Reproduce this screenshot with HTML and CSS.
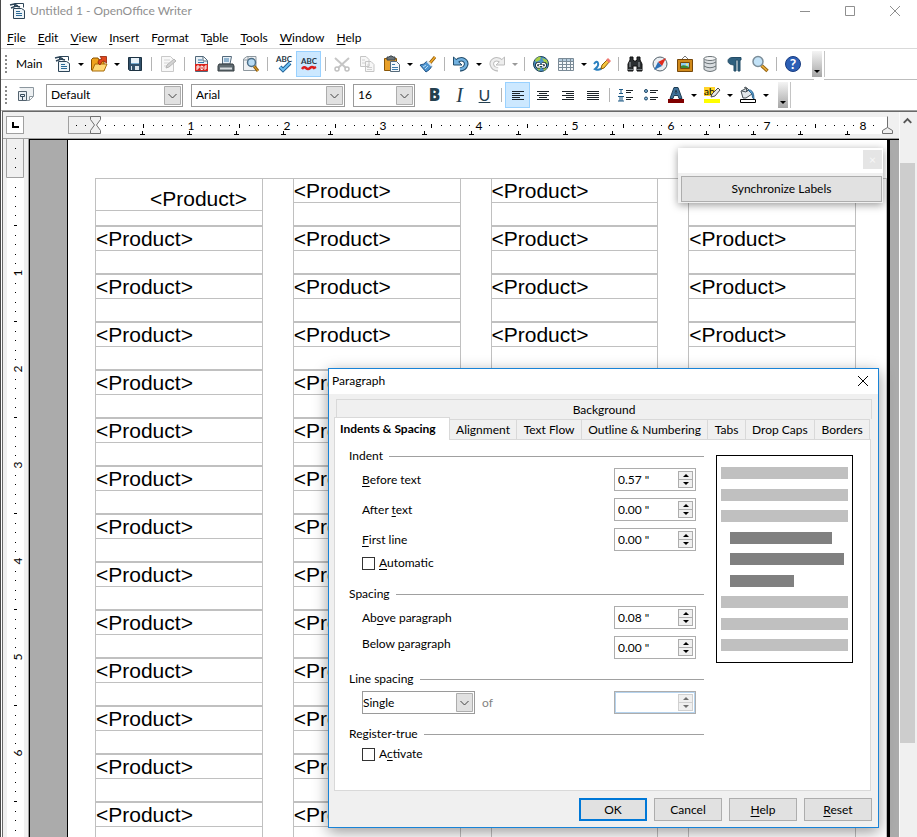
FILE: index.html
```
<!DOCTYPE html>
<html lang="en">

<head>
     <meta charset="UTF-8">
     <meta name="viewport" content="width=device-width, initial-scale=1.0">
     <title>Untitled 1 - OpenOffice Writer</title>
     <link rel="stylesheet" href="styles.css">
</head>

<body>
     <header class="titlebar">
          <svg class="icon" viewBox="0 0 18 18"><path d="M5.500 4V1.500h9v4" fill="#fff" stroke="#2d4558"/><path d="M1 3l4-1 4 2M2 6l5-2 4 1" stroke="#2d4558" stroke-width="1.500" fill="none"/><path d="M4.500 6.500h8l3 2v8h-11z" fill="#eef4f8" stroke="#2d4558"/><path d="M7 9.500h4M7 11.500h6M7 13.500h6" stroke="#2b6a97"/></svg>
          <h1>Untitled 1 - OpenOffice Writer</h1>
          <div class="window-buttons">
               <button aria-label="Minimize"><svg viewBox="0 0 12 12"><path d="M1 6.500h10"/></svg></button>
               <button aria-label="Maximize"><svg viewBox="0 0 12 12"><path d="M1.500 1.500h9v9h-9z"/></svg></button>
               <button aria-label="Close"><svg viewBox="0 0 12 12"><path d="M1 1l10 10M11 1L1 11"/></svg></button>
          </div>
     </header>

     <nav class="menubar">
          <a href="#"><u>F</u>ile</a>
          <a href="#"><u>E</u>dit</a>
          <a href="#"><u>V</u>iew</a>
          <a href="#"><u>I</u>nsert</a>
          <a href="#">F<u>o</u>rmat</a>
          <a href="#">T<u>a</u>ble</a>
          <a href="#"><u>T</u>ools</a>
          <a href="#"><u>W</u>indow</a>
          <a href="#"><u>H</u>elp</a>
     </nav>

     <!-- standard toolbar -->
     <div class="toolbar">
          <i class="grip"></i>
          <span class="toolbar-name">Main</span>
          <button class="tool" aria-label="New"><svg class="icon" viewBox="0 0 18 18"><path d="M5.500 4V1.500h9v4" fill="#fff" stroke="#2d4558"/><path d="M1 3l4-1 4 2M2 6l5-2 4 1" stroke="#2d4558" stroke-width="1.500" fill="none"/><path d="M4.500 6.500h8l3 2v8h-11z" fill="#eef4f8" stroke="#2d4558"/><path d="M7 9.500h4M7 11.500h6M7 13.500h6" stroke="#2b6a97"/></svg></button>
          <button class="drop" aria-label="New options"></button>
          <button class="tool" aria-label="Open"><svg class="icon" viewBox="0 0 18 18"><path d="M1.500 15V4.500L3 3h5l1 2h5v10z" fill="#f0a31c" stroke="#8a5200"/><path d="M2 16l3-7h12l-3 7z" fill="#ffd976" stroke="#a86a08"/><path d="M8 8c0-3 2-4 4-4l-2-2.500h6.500V8L14 6c-2 0-3 2-4 4z" fill="#e2471c" stroke="#8e2308" stroke-width=".8"/></svg></button>
          <button class="drop" aria-label="Open options"></button>
          <button class="tool" aria-label="Save"><svg class="icon" viewBox="0 0 18 18"><path d="M2.500 2.500h13v13h-12l-1-1z" fill="#31506a" stroke="#1d3242"/><path d="M5 3h8v6H5z" fill="#e9f2f8"/><path d="M5 8.500h8" stroke="#74a9cf"/><path d="M5 11h8v4H5z" fill="#dce5ec"/><path d="M6 11h3v4H6z" fill="#31506a"/></svg></button>
          <i class="sep"></i>
          <button class="tool" aria-label="Edit file" disabled><svg class="icon" viewBox="0 0 18 18"><path d="M2.500 1.500h9l3 3v12h-12z" fill="#f8f8f8" stroke="#c9c9c9"/><path d="M5 5h6M5 8h5M5 11h3" stroke="#d4d4d4"/><path d="M7 13l1-3 7-6 2 2-7 6z" fill="#d2d2d2" stroke="#b5b5b5"/></svg></button>
          <i class="sep"></i>
          <button class="tool" aria-label="Export as PDF"><svg class="icon" viewBox="0 0 18 18"><path d="M3.500 1.500h8l4 4v11h-12z" fill="#e9f0f5" stroke="#51687a"/><path d="M11 2v4h4" fill="#fff" stroke="#51687a"/><path d="M6 5h4M6 7.500h6" stroke="#3779a8"/><path d="M3 9h13v7H3z" fill="#d9251d"/><path d="M5 15v-4h2v2H5M9 11v3.500h1.500l.5-1v-2zM13 15v-4h2M13 13h2" fill="none" stroke="#fff"/></svg></button>
          <button class="tool" aria-label="Print"><svg class="icon" viewBox="0 0 18 18"><path d="M5.500 9V1.500h9L13 9z" fill="#e7f0f7" stroke="#54697a"/><path d="M7 4h5M7 6h5" stroke="#3c7ba9"/><path d="M2 9h14l1 2v5H1v-5z" fill="#5f6a70" stroke="#343c40"/><path d="M3 13.500h12" stroke="#d8dde0" stroke-width="2"/></svg></button>
          <button class="tool" aria-label="Page preview"><svg class="icon" viewBox="0 0 18 18"><path d="M1.500 4L5 1.500h9v14H1.500z" fill="#f0f2f4" stroke="#8d979e"/><path d="M2 5h4V2" fill="none" stroke="#8d979e"/><path d="M12 11l4 5" stroke="#93600d" stroke-width="3"/><path d="M12 11l4 5" stroke="#e7aa34"/><circle cx="9.500" cy="7.500" r="4" fill="#b8dcf5" stroke="#4d6f88" stroke-width="1.500"/></svg></button>
          <i class="sep"></i>
          <button class="tool" aria-label="Spelling"><svg class="icon" viewBox="0 0 18 18"><text class="abc" x="9" y="7">ABC</text><path d="M5 12l3 3 7-7" fill="none" stroke="#1e5f94" stroke-width="4"/><path d="M5 12l3 3 7-7" fill="none" stroke="#6ec1f4" stroke-width="2"/></svg></button>
          <button class="tool on" aria-label="AutoSpellcheck"><svg class="icon" viewBox="0 0 18 18"><text class="abc" x="9" y="9">ABC</text><path d="M2 14q2-3 4-1t4 0q2-2 4 0l2-1" fill="none" stroke="#dc1d1d" stroke-width="2.500"/></svg></button>
          <i class="sep"></i>
          <button class="tool" aria-label="Cut" disabled><svg class="icon" viewBox="0 0 18 18"><path d="M2 3l11 10M16 3L5 13" stroke="#c6c6c6" stroke-width="2"/><circle cx="4" cy="14" r="2" fill="none" stroke="#c0c0c0" stroke-width="1.500"/><circle cx="14" cy="14" r="2" fill="none" stroke="#c0c0c0" stroke-width="1.500"/></svg></button>
          <button class="tool" aria-label="Copy" disabled><svg class="icon" viewBox="0 0 18 18"><path d="M2.500 1.500H8l3 3v7H2.500zM7.500 6.500H13l3 3v7H7.500z" fill="#f7f7f7" stroke="#c5c5c5"/><path d="M4 5h3M4 8h3M9 10h3M9 12.500h5M9 14.500h5" stroke="#d0d0d0"/></svg></button>
          <button class="tool" aria-label="Paste"><svg class="icon" viewBox="0 0 18 18"><path d="M1.500 3.500h12v12h-12z" fill="#e9a029" stroke="#8b5707"/><path d="M4 4V2h2l1-1h2l1 1h2v3H4z" fill="#6b7479" stroke="#3e474c"/><path d="M7.500 6.500h6l3 3v7h-9z" fill="#f3f8fc" stroke="#566b7b"/><path d="M9 9.500h3M9 12.500h6M9 14.500h6" stroke="#3d7cab"/></svg></button>
          <button class="drop" aria-label="Paste options"></button>
          <button class="tool" aria-label="Format paintbrush"><svg class="icon" viewBox="0 0 18 18"><path d="M11 8l5-6" stroke="#8a5707" stroke-width="3"/><path d="M11 8l5-6" stroke="#f1a929" stroke-width="1.500"/><path d="M1 10q4 0 7-4l5 5q-2 4-6 6z" fill="#4d94d0" stroke="#1f5285"/><path d="M4 12l3-2M6 14l3-3" stroke="#b9dcf6"/><path d="M8 6l5 5" stroke="#dfe7ed" stroke-width="2"/></svg></button>
          <i class="sep"></i>
          <button class="tool" aria-label="Undo"><svg class="icon" viewBox="0 0 18 18"><path d="M4 7q4-4 8-2 3 2 2 5-1 4-6 4.500" fill="none" stroke="#214c6b" stroke-width="4.500"/><path d="M1.500 2v8H10z" fill="#72b1df" stroke="#214c6b"/><path d="M4 7q4-4 8-2 3 2 2 5-1 4-6 4" fill="none" stroke="#72b1df" stroke-width="2.500"/></svg></button>
          <button class="drop" aria-label="Undo steps"></button>
          <button class="tool" aria-label="Redo" disabled><svg class="icon" viewBox="0 0 18 18"><path d="M14 7q-4-4-8-2-3 2-2 5 1 4 6 4.500" fill="none" stroke="#bcbcbc" stroke-width="4.500"/><path d="M16.500 2v8H8z" fill="#eee" stroke="#bcbcbc"/><path d="M14 7q-4-4-8-2-3 2-2 5 1 4 6 4" fill="none" stroke="#eee" stroke-width="2.500"/></svg></button>
          <button class="drop dim" aria-label="Redo steps" disabled></button>
          <i class="sep"></i>
          <button class="tool" aria-label="Hyperlink"><svg class="icon" viewBox="0 0 18 18"><circle cx="9" cy="9" r="7.500" fill="#4a91c6" stroke="#1d4056"/><path d="M3 5q3-4 6-3l-1 3-4 2zM10 3l5 2 1 4-4-2zM4 12h5l-2 4zM11 12l4 1-3 3z" fill="#a8cf45"/><path d="M8 8.500H5.500q-2 1.500 0 3.500H8M10 8.500h2.500q2 1.500 0 3.500H10M7 10.300h4" fill="none" stroke="#17262f" stroke-width="3"/><path d="M8 8.500H5.500q-2 1.500 0 3.500H8M10 8.500h2.500q2 1.500 0 3.500H10M7 10.300h4" fill="none" stroke="#fff" stroke-width="1.300"/></svg></button>
          <button class="tool" aria-label="Table"><svg class="icon" viewBox="0 0 18 18"><path d="M1.500 3.500h15v12h-15z" fill="#f5f8fa" stroke="#7b8b97"/><path d="M2 5h14" stroke="#b4cbdc" stroke-width="2"/><path d="M1 6.500h16M1 9.500h16M1 12.500h16M5.500 4v11M9.500 4v11M13.500 4v11" stroke="#7b8b97"/></svg></button>
          <button class="drop" aria-label="Table size"></button>
          <button class="tool" aria-label="Show draw functions"><svg class="icon" viewBox="0 0 18 18"><path d="M1 9q3-4 4-1t-3 6q4 2 7-1" fill="none" stroke="#2c81c0" stroke-width="2"/><path d="M8 14l1-4 6-6 2 2-6 7z" fill="#f6c43c" stroke="#8b5d0b"/><path d="M13 5l3 3 2-2-3-3z" fill="#ef7770"/></svg></button>
          <i class="sep"></i>
          <button class="tool" aria-label="Find and replace"><svg class="icon" viewBox="0 0 18 18"><path d="M4 2h3v3l1 1h2l1-1V2h3v3l2 4v7h-5v-5H7v5H2V9l2-4z" fill="#2b2f31" stroke="#111"/><path d="M4 7v5M13 7v5" stroke="#a3aaae"/><path d="M2 14.500h5M11 14.500h5" stroke="#757b7e"/></svg></button>
          <button class="tool" aria-label="Navigator"><svg class="icon" viewBox="0 0 18 18"><circle cx="9" cy="9" r="7" fill="#e9eef2" stroke="#54616b"/><path d="M15 3L7 7l4 4z" fill="#e02a1e"/><path d="M3 15l4-8 4 4z" fill="#2b70b7"/></svg></button>
          <button class="tool" aria-label="Gallery"><svg class="icon" viewBox="0 0 18 18"><path d="M5 5l4-4 4 4" fill="none" stroke="#777"/><path d="M1.500 4.500h15v12h-15z" fill="#d18a1a" stroke="#77480a"/><path d="M4.500 7.500h9v6h-9z" fill="#8ecdf3" stroke="#77480a"/><path d="M5 11q3-2 8 1v1H5z" fill="#3b8a34"/><circle cx="11" cy="9.500" r="1" fill="#fff06a"/></svg></button>
          <button class="tool" aria-label="Data sources"><svg class="icon" viewBox="0 0 18 18"><path d="M3 3.500v11q6 4 12 0v-11" fill="#d9dde0" stroke="#6c7478"/><ellipse cx="9" cy="3.500" rx="6" ry="2" fill="#f5f6f7" stroke="#6c7478"/><path d="M3 7q6 3.500 12 0M3 11q6 3.500 12 0" fill="none" stroke="#6c7478"/></svg></button>
          <button class="tool" aria-label="Nonprinting characters"><svg class="icon" viewBox="0 0 18 18"><path d="M15 2.500H7q-5 0-5 3.500t6 4v6h2V5h2v11h2V5h1z" fill="#2f607f" stroke="#234c66"/></svg></button>
          <button class="tool" aria-label="Zoom"><svg class="icon" viewBox="0 0 18 18"><path d="M10.500 10.500l6 5.500" stroke="#94620e" stroke-width="3.500"/><path d="M10.500 10.500l5.500 5" stroke="#f0b440" stroke-width="1.500"/><circle cx="7" cy="6.500" r="5" fill="#c2e2f7" stroke="#7b8d99" stroke-width="1.500"/></svg></button>
          <i class="sep"></i>
          <button class="tool" aria-label="Help"><svg class="icon" viewBox="0 0 18 18"><circle cx="9" cy="9" r="7.500" fill="#2c5fb5" stroke="#173b80"/><text class="question" x="9" y="14">?</text></svg></button>
          <button class="overflow" aria-label="Toolbar options"></button>
     </div>

     <!-- formatting toolbar -->
     <div class="toolbar formatting">
          <i class="grip"></i>
          <button class="tool styles-tool" aria-label="Styles and formatting"><svg class="icon" viewBox="0 0 18 18"><path d="M2.500 1.500h14v9l-4 4h-5" fill="#edf0f2" stroke="#8b969e"/><path d="M12.500 14v-3.500H16" fill="#fff" stroke="#8b969e"/><path d="M1.500 5.500h8v9h-8z" fill="#e9eef2" stroke="#53636f"/><path d="M3.500 8.500h4v2h-4zM5.500 11v3" fill="none" stroke="#34495a"/></svg></button>
          <select class="combo style-combo" aria-label="Apply style"><option>Default</option></select>
          <select class="combo font-combo" aria-label="Font name"><option>Arial</option></select>
          <select class="combo size-combo" aria-label="Font size"><option>16</option></select>
          <button class="tool letter bold" aria-label="Bold">B</button>
          <button class="tool letter italic" aria-label="Italic">I</button>
          <button class="tool letter underline" aria-label="Underline">U</button>
          <i class="sep"></i>
          <button class="tool on" aria-label="Align left"><svg class="icon" viewBox="0 0 18 18"><path class="lines" d="M3 5.500h12M3 7.500h8M3 9.500h12M3 11.500h8M3 13.500h12"/></svg></button>
          <button class="tool" aria-label="Centered"><svg class="icon" viewBox="0 0 18 18"><path class="lines" d="M3 5.500h12M5 7.500h8M3 9.500h12M5 11.500h8M3 13.500h12"/></svg></button>
          <button class="tool" aria-label="Align right"><svg class="icon" viewBox="0 0 18 18"><path class="lines" d="M3 5.500h12M7 7.500h8M3 9.500h12M7 11.500h8M3 13.500h12"/></svg></button>
          <button class="tool" aria-label="Justified"><svg class="icon" viewBox="0 0 18 18"><path class="lines" d="M3 5.500h12M3 7.500h12M3 9.500h12M3 11.500h12M3 13.500h12"/></svg></button>
          <i class="sep"></i>
          <button class="tool" aria-label="Numbering"><svg class="icon" viewBox="0 0 18 18"><path d="M2 3.500h4M4 3v4M2 7.500h4M1 10.500h6M3 11v4M5 11v4M1 15h6" stroke="#1f5a86"/><path class="lines" d="M9 4.500h7M9 6.500h5M9 11.500h7M9 13.500h5"/></svg></button>
          <button class="tool" aria-label="Bullets"><svg class="icon" viewBox="0 0 18 18"><circle cx="4" cy="5" r="1.500" fill="#87b9de" stroke="#1d4563"/><circle cx="4" cy="12.500" r="1.500" fill="#87b9de" stroke="#1d4563"/><path class="lines" d="M8 4.500h8M8 6.500h6M8 11.500h8M8 13.500h6"/></svg></button>
          <button class="tool" aria-label="Font color"><svg class="icon" viewBox="0 0 18 18"><path d="M3 12.500L7 1.500h4l4 11h-3l-1-3H7l-1 3zM8 7h2L9 4z" fill="#3f7199" stroke="#1d3b52"/><path d="M1 13h16v4H1z" fill="#800000"/></svg></button>
          <button class="drop" aria-label="Font color options"></button>
          <button class="tool" aria-label="Highlighting"><svg class="icon" viewBox="0 0 18 18"><path d="M1 1h11v9H1z" fill="#ffd42a"/><text class="ab" x="1" y="9">ab</text><path d="M8 11l1-3 6-6 2 2-5 6z" fill="#e9e9e9" stroke="#4a4a4a"/><path d="M1 13h16v4H1z" fill="#ff0"/></svg></button>
          <button class="drop" aria-label="Highlighting options"></button>
          <button class="tool" aria-label="Background color"><svg class="icon" viewBox="0 0 18 18"><path d="M2 5l6-3 5 6-6 4H4z" fill="#e3e7ea" stroke="#444d53"/><path d="M3 5l4 1 3-3M5 2l2-1 1 5" fill="none" stroke="#444d53"/><path d="M9 4q6-1 6 9-2 0-2-5z" fill="#5fa3d5" stroke="#2c6691"/><path d="M1.500 13.500h15v3h-15z" fill="#fff" stroke="#000"/></svg></button>
          <button class="drop" aria-label="Background color options"></button>
          <button class="overflow" aria-label="Toolbar options"></button>
     </div>

     <main class="editor">
          <div class="view">
               <div class="ruler-row">
                    <button class="tab-type" aria-label="Tab type"><svg viewBox="0 0 16 16"><path d="M6 5v5h6" fill="none" stroke="#000" stroke-width="2"/></svg></button>
                    <svg class="ruler-top" id="rulerTop">
                         <rect class="margin" x="0.500" y="0.500" width="27" height="17"/>
                         <rect class="scale" x="28" y="1" width="791" height="17"/>
                         <path class="marker" d="M22.500.5h10v3l-4 5.500 4 5.500v3h-10v-3l4-5.500-4-5.500z"/>
                         <path class="marker" d="M819.500.5v11l-5 3v3h10v-3l-5-3"/>
                    </svg>
               </div>
               <div class="page-row">
                    <svg class="ruler-left" id="rulerLeft">
                         <rect class="scale" x="1" y="0" width="17" height="100%"/>
                         <path class="margin" d="M.5 0v38.500h17V0"/>
                    </svg>
                    <div class="canvas">
                         <div class="page">
                              <div class="labels" id="labels"></div>
                         </div>
                    </div>
               </div>
          </div>
          <div class="scrollbar">
               <svg viewBox="0 0 16 16"><path d="M4 11l4-4 4 4" fill="none" stroke="#555" stroke-width="2"/></svg>
               <div class="thumb"></div>
          </div>
     </main>

     <div class="sync-window">
          <div class="sync-title"><button class="sync-close" aria-label="Close">×</button></div>
          <button class="push sync-button">Synchronize Labels</button>
     </div>

     <form class="dialog" id="paragraph">
          <div class="dialog-title">
               <h2>Paragraph</h2>
               <button type="button" aria-label="Close"><svg viewBox="0 0 12 12"><path d="M1 1l10 10M11 1L1 11"/></svg></button>
          </div>
          <div class="tabs">
               <button type="button" class="tab back">Background</button>
               <div class="tab-row">
                    <button type="button" class="tab current">Indents &amp; Spacing</button>
                    <button type="button" class="tab">Alignment</button>
                    <button type="button" class="tab">Text Flow</button>
                    <button type="button" class="tab">Outline &amp; Numbering</button>
                    <button type="button" class="tab">Tabs</button>
                    <button type="button" class="tab">Drop Caps</button>
                    <button type="button" class="tab">Borders</button>
               </div>
          </div>
          <div class="panel">
               <div class="settings">
                    <fieldset>
                         <legend>Indent</legend>
                         <div class="field">
                              <label for="before"><u>B</u>efore text</label>
                              <span class="spin"><input type="text" id="before" value='0.57 "'><span class="steps"><button type="button" class="up" aria-label="Increase"></button><button type="button" class="down" aria-label="Decrease"></button></span></span>
                         </div>
                         <div class="field">
                              <label for="after">After <u>t</u>ext</label>
                              <span class="spin"><input type="text" id="after" value='0.00 "'><span class="steps"><button type="button" class="up" aria-label="Increase"></button><button type="button" class="down" aria-label="Decrease"></button></span></span>
                         </div>
                         <div class="field">
                              <label for="first"><u>F</u>irst line</label>
                              <span class="spin"><input type="text" id="first" value='0.00 "'><span class="steps"><button type="button" class="up" aria-label="Increase"></button><button type="button" class="down" aria-label="Decrease"></button></span></span>
                         </div>
                         <label class="check"><input type="checkbox"><span><u>A</u>utomatic</span></label>
                    </fieldset>
                    <fieldset>
                         <legend>Spacing</legend>
                         <div class="field">
                              <label for="above">Ab<u>o</u>ve paragraph</label>
                              <span class="spin"><input type="text" id="above" value='0.08 "'><span class="steps"><button type="button" class="up" aria-label="Increase"></button><button type="button" class="down" aria-label="Decrease"></button></span></span>
                         </div>
                         <div class="field raised">
                              <label for="below">Below <u>p</u>aragraph</label>
                              <span class="spin"><input type="text" id="below" value='0.00 "'><span class="steps"><button type="button" class="up" aria-label="Increase"></button><button type="button" class="down" aria-label="Decrease"></button></span></span>
                         </div>
                    </fieldset>
                    <fieldset>
                         <legend>Line spacing</legend>
                         <div class="field">
                              <select class="combo line-combo" aria-label="Line spacing"><option>Single</option></select>
                              <label class="of" for="of">of</label>
                              <span class="spin off"><input type="text" id="of" disabled><span class="steps"><button type="button" class="up" aria-label="Increase" disabled></button><button type="button" class="down" aria-label="Decrease" disabled></button></span></span>
                         </div>
                    </fieldset>
                    <fieldset>
                         <legend>Register-true</legend>
                         <label class="check"><input type="checkbox"><span>A<u>c</u>tivate</span></label>
                    </fieldset>
               </div>
               <div class="preview">
                    <i></i><i></i><i></i>
                    <i class="dark first"></i><i class="dark"></i><i class="dark last"></i>
                    <i></i><i></i><i></i>
               </div>
          </div>
          <div class="actions">
               <button type="button" class="push default">OK</button>
               <button type="button" class="push">Cancel</button>
               <button type="button" class="push"><u>H</u>elp</button>
               <button type="reset" class="push"><u>R</u>eset</button>
          </div>
     </form>

     <script>
          const app = {
               inch: 96,
               columns: 4,
               rows: 14,
               svg: function (parent, tag, attrs, text) {
                    const node = document.createElementNS('http://www.w3.org/2000/svg', tag);
                    Object.keys(attrs).map(key => node.setAttribute(key, attrs[key]));
                    if (text) node.textContent = text;
                    parent.appendChild(node);
               },
               drawTop: function () {
                    const ruler = document.getElementById('rulerTop');
                    const zero = 27;
                    [9, 18].map(x => this.svg(ruler, 'rect', { x: x - 1, y: 9, width: 1, height: 1 }));
                    for (let i = 1; i < 82; i++) {
                         const x = Math.round(zero + i * this.inch / 10);
                         if (i % 10 === 0) {
                              this.svg(ruler, 'text', { x: x, y: 14 }, i / 10);
                         } else if (i % 5 === 0) {
                              this.svg(ruler, 'rect', { x: x, y: 8, width: 1, height: 4 });
                         } else {
                              this.svg(ruler, 'rect', { x: x, y: 9, width: 1, height: 1 });
                         }
                    }
                    // default tab stops
                    for (let x = 74; x < 800; x += 47) {
                         this.svg(ruler, 'path', { d: 'M' + x + ' 15h1v3h2v1h-5v-1h2z' });
                    }
               },
               drawLeft: function () {
                    const ruler = document.getElementById('rulerLeft');
                    const zero = 38;
                    [10, 20, 29].map(y => this.svg(ruler, 'rect', { x: 9, y: y - 1, width: 1, height: 1 }));
                    for (let i = 1; zero + i * this.inch / 10 < ruler.clientHeight; i++) {
                         const y = Math.round(zero + i * this.inch / 10);
                         if (i % 10 === 0) {
                              this.svg(ruler, 'text', { transform: 'translate(16 ' + y + ') rotate(-90)' }, i / 10);
                         } else if (i % 5 === 0) {
                              this.svg(ruler, 'rect', { x: 8, y: y, width: 3, height: 1 });
                         } else {
                              this.svg(ruler, 'rect', { x: 9, y: y, width: 1, height: 1 });
                         }
                    }
               },
               drawLabels: function () {
                    const labels = document.getElementById('labels');
                    for (let i = 0; i < this.rows * this.columns; i++) {
                         const label = document.createElement('div');
                         const field = document.createElement('p');
                         label.className = i === 0 ? 'label indented' : 'label';
                         field.textContent = '<Product>';
                         label.appendChild(field);
                         labels.appendChild(label);
                    }
               },
               init: function () {
                    this.drawTop();
                    this.drawLeft();
                    this.drawLabels();
               }
          }

          app.init();
     </script>
</body>

</html>
```
FILE: styles.css
```
* {
  box-sizing: border-box;
}

body {
  position: relative;
  display: flex;
  flex-direction: column;
  height: 100vh;
  margin: 0;
  overflow: hidden;
  border-left: 1px solid #4a4a4a;
  background: #fff;
  color: #000;
  font: 12px/16px Lato, "Open Sans", sans-serif;
}

button,
input,
select {
  margin: 0;
  padding: 0;
  border: 0;
  border-radius: 0;
  background: none;
  color: inherit;
  font: inherit;
}

u {
  text-underline-offset: 2px;
}

/* title and menu */

.titlebar {
  display: flex;
  align-items: center;
  flex: none;
  height: 22px;
  padding-left: 8px;
}

.titlebar h1 {
  flex: 1;
  margin: 0 0 0 3px;
  color: #8f8f8f;
  font-size: 12px;
  font-weight: normal;
}

.window-buttons {
  display: flex;
}

.window-buttons button {
  display: flex;
  justify-content: center;
  width: 45px;
}

.window-buttons svg,
.dialog-title svg {
  width: 12px;
  height: 12px;
  fill: none;
  stroke: #8f8f8f;
}

.menubar {
  display: flex;
  align-items: center;
  flex: none;
  gap: 12px;
  height: 26px;
  padding: 6px 6px 0;
}

.menubar a {
  color: #000;
  text-decoration: none;
}

/* toolbars */

.toolbar {
  display: flex;
  align-items: center;
  flex: none;
  height: 32px;
  border-top: 1px solid #d9d9d9;
  border-bottom: 1px solid #bdbdbd;
}

.toolbar.formatting {
  height: 31px;
  border-top: 0;
  border-bottom: 1px solid #bdbdbd;
}

.grip {
  flex: none;
  width: 2px;
  height: 18px;
  margin-left: 4px;
  background: repeating-linear-gradient(#8a8a8a 0 2px, #fff 2px 4px);
}

.toolbar-name {
  width: 34px;
  margin-left: 9px;
}

.icon {
  display: block;
  width: 18px;
  height: 18px;
  overflow: visible;
}

.tool {
  display: flex;
  align-items: center;
  justify-content: center;
  flex: none;
  width: 25px;
  height: 26px;
  border: 1px solid transparent;
}

.tool.on {
  border-color: #99d1ff;
  background: #cce8ff;
}

.drop {
  display: flex;
  justify-content: center;
  flex: none;
  width: 11px;
}

.drop::after,
.overflow::after {
  content: "";
  border: 3px solid transparent;
  border-top-color: #000;
  border-bottom: 0;
}

.drop.dim::after {
  border-top-color: #999;
}

.sep {
  flex: none;
  width: 8px;
  height: 14px;
  background: linear-gradient(#b4b4b4, #b4b4b4) center / 1px 100% no-repeat;
}

.overflow {
  display: flex;
  align-items: flex-end;
  justify-content: center;
  width: 10px;
  height: 26px;
  margin-left: 7px;
  padding-bottom: 4px;
  background: linear-gradient(#f4f4f4, #a6a6a6);
  box-shadow: 2px 0 #fff, 2px 3px #fff, 3px 0 #c4c4c4;
}

.abc {
  fill: #263845;
  font: bold 8px Lato, sans-serif;
  text-anchor: middle;
}

.ab {
  font: 10px Lato, sans-serif;
}

.question {
  fill: #fff;
  font: bold 14px Lato, sans-serif;
  text-anchor: middle;
}

.lines {
  stroke: #1c2328;
}

.styles-tool {
  margin: 0 8px 0 6px;
}

.combo {
  height: 23px;
  padding: 0 20px 0 4px;
  border: 1px solid #9a9a9a;
  background: #fff url("data:image/svg+xml,%3Csvg xmlns='http://www.w3.org/2000/svg' width='17' height='19'%3E%3Cpath d='M.5.5h16v18H.5z' fill='%23e1e1e1' stroke='%23adadad'/%3E%3Cpath d='M4.500 8l4 4 4-4' fill='none' stroke='%23444'/%3E%3C/svg%3E") right 1px center no-repeat;
  appearance: none;
}

.style-combo {
  width: 137px;
}

.font-combo {
  width: 154px;
  margin: 0 8px;
}

.size-combo {
  width: 62px;
  margin-right: 7px;
}

.letter {
  color: #25404f;
  font-size: 17px;
}

.letter.bold {
  font-family: "Open Sans", sans-serif;
  font-weight: 800;
}

.letter.italic {
  font-family: "Liberation Serif", serif;
  font-size: 20px;
  font-style: italic;
}

.letter.underline {
  font-size: 16px;
  text-decoration: underline;
}

/* document area */

.editor {
  display: flex;
  flex: 1;
  min-height: 0;
  margin-left: 1px;
  border-top: 1px solid #696969;
  border-left: 1px solid #696969;
  background: #f0f0f0;
  box-shadow: 0 -1px #a0a0a0;
}

.view {
  display: flex;
  flex: 1;
  flex-direction: column;
  min-width: 0;
}

.ruler-row {
  display: flex;
  flex: none;
  height: 27px;
  padding: 4px 0 0 3px;
  border-bottom: 1px solid #a0a0a0;
}

.tab-type {
  width: 18px;
  height: 18px;
  border: 1px solid #a0a0a0;
  background: #fff;
}

.tab-type svg {
  display: block;
}

.ruler-top {
  flex: 1;
  height: 20px;
  margin-left: 44px;
}

.ruler-top text,
.ruler-left text {
  font-size: 12px;
  text-anchor: middle;
}

.margin {
  fill: #f0f0f0;
  stroke: #a0a0a0;
}

.scale {
  fill: #fff;
}

.marker {
  fill: #f0f0f0;
  stroke: #707070;
}

.page-row {
  display: flex;
  flex: 1;
  min-height: 0;
}

.ruler-left {
  width: 19px;
  height: 100%;
  margin: 0 4px 0 3px;
}

.canvas {
  display: flex;
  flex: 1;
  border: solid #000;
  border-width: 1px 0 0 1px;
  outline: 1px solid #a0a0a0;
  padding: 0 9px 0 37px;
  background: #ababab;
}

.page {
  flex: 1;
  overflow: hidden;
  padding: 38px 0 0 27px;
  border: solid #000;
  border-width: 0 3px 0 1px;
  background: #fff;
}

.labels {
  display: grid;
  grid-template-columns: repeat(4, 1fr);
  column-gap: 30px;
  padding-right: 30px;
  border: solid #c0c0c0;
  border-width: 1px 1px 0 0;
}

.label {
  height: 48px;
  border: solid #c0c0c0;
  border-width: 0 1px 2px;
}

.label p {
  margin: 0;
  border-bottom: 1px solid #c0c0c0;
  font: 21px/23px "Liberation Sans", Arial, sans-serif;
}

.label.indented p {
  padding: 8px 0 0 54px;
}

.scrollbar {
  display: flex;
  flex-direction: column;
  width: 18px;
  padding-right: 2px;
  border-left: 1px solid #fafafa;
}

.scrollbar svg {
  flex: none;
  height: 16px;
  margin-bottom: 35px;
}

.thumb {
  height: 80%;
  background: #cdcdcd;
}

/* floating windows */

.push {
  height: 23px;
  border: 1px solid #adadad;
  background: #e1e1e1;
}

.sync-window {
  position: absolute;
  top: 148px;
  left: 677px;
  width: 205px;
  padding: 0 1px 1px 3px;
  background: #f0f0f0;
  box-shadow: 0 2px 8px rgba(0, 0, 0, .4);
}

.sync-title {
  display: flex;
  justify-content: flex-end;
  height: 25px;
  margin: 0 -1px 3px -3px;
  padding: 2px 1px 0 0;
  background: #fff;
}

.sync-close {
  width: 19px;
  height: 19px;
  background: #e5e5e5;
  color: #f7f7f7;
}

.sync-button {
  display: block;
  width: 100%;
  height: 26px;
}

.dialog {
  position: absolute;
  top: 368px;
  left: 327px;
  width: 551px;
  padding: 0 7px 6px 5px;
  border: 1px solid #1883d7;
  background: #f0f0f0;
  box-shadow: 0 4px 14px rgba(0, 0, 0, .4);
}

.dialog-title {
  display: flex;
  align-items: center;
  justify-content: space-between;
  height: 25px;
  margin: 0 -7px 5px -5px;
  padding: 0 9px 1px 3px;
  background: #fff;
}

.dialog-title h2 {
  margin: 0;
  font-size: 12px;
  font-weight: normal;
}

.dialog-title button {
  display: flex;
}

.dialog-title svg {
  stroke: #000;
}

.tab {
  height: 20px;
  flex: auto;
  border: solid #d9d9d9;
  border-width: 1px 1px 0 0;
  background: #f0f0f0;
  white-space: nowrap;
}

.tab.back {
  display: block;
  width: calc(100% - 1px);
  margin-left: 2px;
  border-left-width: 1px;
}

.tab-row {
  display: flex;
  align-items: flex-end;
  padding-right: 1px;
}

.tab.current {
  z-index: 1;
  flex: none;
  height: 23px;
  margin: -3px 0 -1px;
  padding: 0 13px 1px 5px;
  border-left-width: 1px;
  background: #fff;
  font-weight: bold;
}

.panel {
  display: flex;
  gap: 12px;
  height: 352px;
  padding: 8px 17px 0 14px;
  border: 1px solid #d9d9d9;
  background: #fff;
}

.settings {
  flex: 1;
}

fieldset {
  min-width: 0;
  margin: 0 0 12px;
  padding: 4px 0 0;
  border: 0;
  border-top: 1px solid #a0a0a0;
}

legend {
  padding: 0 6px 0 0;
}

.field {
  display: flex;
  align-items: center;
  justify-content: space-between;
  height: 23px;
  margin: 0 8px 7px 13px;
}

.field:last-child {
  margin-bottom: 0;
}

.field.raised label {
  padding-bottom: 8px;
}

.spin {
  display: flex;
  width: 82px;
  height: 23px;
  padding: 2px;
  border: 1px solid #adadad;
  background: #fff;
}

.spin input {
  flex: 1;
  min-width: 0;
  padding-left: 1px;
}

.steps {
  display: flex;
  flex-direction: column;
  width: 15px;
}

.steps button {
  display: flex;
  align-items: center;
  justify-content: center;
  flex: 1;
  border: 1px solid #adadad;
  background: #f0f0f0;
}

.steps .down {
  margin-top: -1px;
}

.steps button::after {
  content: "";
  border: 3px solid transparent;
}

.steps .up::after {
  border-top: 0;
  border-bottom-color: #000;
}

.steps .down::after {
  border-bottom: 0;
  border-top-color: #000;
}

.spin.off {
  box-shadow: inset 0 0 0 1px #b5d3ee;
}

.spin.off button {
  border-color: #d0d0d0;
}

.spin.off .up::after {
  border-bottom-color: #707070;
}

.spin.off .down::after {
  border-top-color: #707070;
}

.check {
  display: flex;
  align-items: center;
  gap: 4px;
  height: 16px;
  margin-left: 13px;
}

.field + .check {
  margin-top: -3px;
  margin-bottom: 15px;
}

.field + .check:last-child {
  margin-bottom: 3px;
}

.check input {
  width: 13px;
  height: 13px;
  border: 1px solid #333;
  background: #fff;
  appearance: none;
}

.line-combo {
  width: 113px;
  padding-left: 0;
}

.of {
  flex: 1;
  padding-left: 7px;
  color: #838383;
}

.preview {
  display: flex;
  flex-direction: column;
  justify-content: space-between;
  width: 137px;
  height: 208px;
  margin-top: 7px;
  padding: 11px 4px;
  border: 1px solid #000;
}

.preview i {
  height: 12px;
  background: #c0c0c0;
}

.preview .dark {
  margin: 0 4px 0 9px;
  background: #808080;
}

.preview .first {
  margin-right: 16px;
}

.preview .last {
  width: 64px;
}

.actions {
  display: flex;
  justify-content: flex-end;
  gap: 7px;
  margin: 7px -1px 0 0;
}

.actions .push {
  width: 68px;
}

.push.default {
  border: 2px solid #0078d7;
}
```
